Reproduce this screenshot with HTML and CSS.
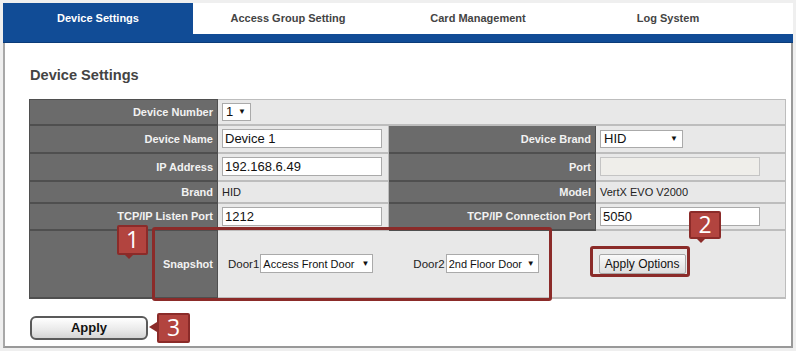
FILE: index.html
```html
<!doctype html>
<html lang="en">

<head>
  <meta charset="utf-8">
  <title>Device Settings</title>
  <link rel="stylesheet" href="styles.css">
</head>

<body>
  <div class="ds-page">
    <nav class="ds-tabs">
      <a class="ds-tab is-active">Device Settings</a>
      <a class="ds-tab">Access Group Setting</a>
      <a class="ds-tab">Card Management</a>
      <a class="ds-tab">Log System</a>
    </nav>
    <div class="ds-bar"></div>

    <main class="ds-panel">
      <h2 class="ds-title">Device Settings</h2>

      <table class="ds-form">
        <colgroup>
          <col class="col-l1"><col class="col-v1"><col class="col-l2"><col class="col-v2">
        </colgroup>
        <tr class="row-num">
          <th>Device Number</th>
          <td colspan="3"><span class="ds-select sel-num">1<i>▼</i></span></td>
        </tr>
        <tr class="row-in">
          <th>Device Name</th>
          <td><input class="ds-input" type="text" value="Device 1"></td>
          <th>Device Brand</th>
          <td><span class="ds-select sel-brand">HID<i>▼</i></span></td>
        </tr>
        <tr class="row-in">
          <th>IP Address</th>
          <td><input class="ds-input" type="text" value="192.168.6.49"></td>
          <th>Port</th>
          <td><input class="ds-input ds-input--off" type="text" disabled></td>
        </tr>
        <tr class="row-text">
          <th>Brand</th>
          <td>HID</td>
          <th>Model</th>
          <td>VertX EVO V2000</td>
        </tr>
        <tr class="row-port">
          <th>TCP/IP Listen Port</th>
          <td><input class="ds-input" type="text" value="1212"></td>
          <th>TCP/IP Connection Port</th>
          <td><input class="ds-input" type="text" value="5050"></td>
        </tr>
        <tr class="row-snap">
          <th>Snapshot</th>
          <td colspan="3">
            <div class="ds-snap">
              <span class="ds-door">Door1</span>
              <span class="ds-select sel-door1">Access Front Door<i>▼</i></span>
              <span class="ds-door door2">Door2</span>
              <span class="ds-select sel-door2">2nd Floor Door<i>▼</i></span>
              <button class="ds-btn-options" type="button">Apply Options</button>
            </div>
          </td>
        </tr>
      </table>

      <button class="ds-btn-apply" type="button">Apply</button>

      <!-- callouts -->
      <div class="ds-mark mark-1"></div>
      <div class="ds-badge badge-1">1</div>
      <div class="ds-mark mark-2"></div>
      <div class="ds-badge badge-2">2</div>
      <div class="ds-badge badge-3">3</div>
    </main>
  </div>
</body>

</html>
```

FILE: styles.css
```css
:root {
  --blue: #114c96;
  --blueDark: #0b3b78;
  --cellDark: #6b6b6b;
  --cellLight: #e8e8e8;
  --red: #8b2b29;
  --redFill: #b2443f;
  --text: #222;
}

html body {
  margin: 0;
  padding: 0;
}

body {
  font-family: "Liberation Sans", Arial, sans-serif;
  font-size: 11px;
  color: var(--text);
  background-color: #efefef;
}

.ds-page {
  margin: 3px 3px 0 3px;
  width: 790px;
}

/* tabs */

.ds-tabs {
  display: flex;
  height: 31px;
  background-color: #fff;
}

.ds-tab {
  width: 190px;
  display: flex;
  align-items: center;
  justify-content: center;
  font-weight: bold;
  font-size: 11px;
  color: #444;
  padding-bottom: 1px;
}

.ds-tab.is-active {
  background-color: var(--blue);
  color: #fff;
}

.ds-bar {
  height: 8px;
  background-color: var(--blue);
  border-bottom: 1px solid var(--blueDark);
}

/* panel */

.ds-panel {
  position: relative;
  background-color: #fff;
  border-left: 2px solid #a8a8a8;
  border-right: 2px solid #999;
  border-bottom: 2px solid #999;
  padding: 23px 6px 8px 24px;
  height: 272px;
}

.ds-title {
  margin: 0 0 15px 1px;
  font-size: 14.6px;
  line-height: 18px;
  color: #444;
}

/* form table */

.ds-form {
  table-layout: fixed;
  width: 756px;
  border-collapse: collapse;
  border: 1px solid #7a7a7a;
}

.col-l1 { width: 188px; }
.col-v1 { width: 171px; }
.col-l2 { width: 207px; }
.col-v2 { width: 190px; }

.ds-form th,
.ds-form td {
  padding: 0;
  vertical-align: middle;
  white-space: nowrap;
}

.ds-form th {
  background-color: var(--cellDark);
  color: #f2f2f2;
  font-weight: bold;
  font-size: 11px;
  text-align: right;
  padding-right: 4px;
  border: 1px solid #4f4f4f;
  border-bottom-width: 2px;
}

.ds-form td {
  background-color: var(--cellLight);
  padding-left: 4px;
  border: 1px solid #bdbdbd;
  border-bottom-width: 2px;
  font-size: 11px;
}

.row-num { height: 25px; }
.row-in { height: 28px; }
.row-text { height: 22px; }
.row-port { height: 27px; }
.row-snap { height: 68px; }

.ds-input {
  box-sizing: border-box;
  width: 160px;
  height: 19px;
  margin: 0;
  padding: 0 2px;
  border: 1px solid #aaa;
  background: #fff;
  font-family: "Liberation Sans", Arial, sans-serif;
  font-size: 13px;
  color: #111;
  display: block;
}

.ds-input--off {
  background-color: #efeeea;
  border-color: #c4c4c4;
}

.ds-select {
  box-sizing: border-box;
  display: flex;
  align-items: center;
  justify-content: space-between;
  height: 18px;
  padding: 0 4px 0 3px;
  border: 1px solid #aaa;
  background-color: #fff;
  font-size: 13px;
  color: #111;
  white-space: nowrap;
}

.ds-select i {
  font-style: normal;
  font-size: 8px;
}

.sel-num { width: 29px; }
.sel-brand { width: 83px; }

.ds-snap {
  display: flex;
  align-items: center;
  padding-left: 6px;
}

.ds-door {
  font-size: 11.5px;
  margin-right: 1px;
}

.door2 {
  margin-left: 40px;
}

.sel-door1,
.sel-door2 {
  flex: none;
  height: 19px;
  font-size: 11px;
  padding-left: 2px;
  padding-right: 3px;
}

.sel-door1 { width: 113px; }
.sel-door2 { width: 93px; }

.ds-btn-options {
  margin-left: 60px;
  width: 87px;
  height: 20px;
  padding: 0;
  font-family: "Liberation Sans", Arial, sans-serif;
  font-size: 12px;
  color: #111;
  border: 1px solid #a8a8a8;
  border-radius: 2px;
  background: linear-gradient(#fafafa, #dedede);
}

.ds-btn-apply {
  display: block;
  margin-top: 17px;
  margin-left: 1px;
  width: 118px;
  height: 24px;
  padding: 0;
  font-family: "Liberation Sans", Arial, sans-serif;
  font-size: 13px;
  font-weight: bold;
  color: #111;
  border: 2px solid #5a5a5a;
  border-radius: 6px;
  background: linear-gradient(#ffffff, #e9e9e9 60%, #d4d4d4);
}

/* callouts */

.ds-mark {
  position: absolute;
  box-sizing: border-box;
  border: 3px solid var(--red);
  border-radius: 3px;
}

.mark-1 {
  left: 147px;
  top: 184px;
  width: 400px;
  height: 74px;
}

.mark-2 {
  left: 585px;
  top: 203px;
  width: 100px;
  height: 31px;
}

.ds-badge {
  position: absolute;
  box-sizing: border-box;
  width: 31px;
  height: 30px;
  background-color: var(--redFill);
  border: 2px solid var(--red);
  border-radius: 2px;
  color: #fff;
  font-family: "Open Sans", "DejaVu Sans", sans-serif;
  font-size: 23px;
  line-height: 25px;
  text-align: center;
}

.ds-badge::after {
  content: "";
  position: absolute;
  width: 0;
  height: 0;
}

.badge-1 {
  left: 112px;
  top: 182px;
}

.badge-1::after,
.badge-2::after {
  left: 6px;
  bottom: -6px;
  border-left: 4px solid transparent;
  border-right: 4px solid transparent;
  border-top: 4px solid var(--red);
}

.badge-2 {
  left: 684px;
  top: 168px;
  width: 32px;
  height: 28px;
  line-height: 23px;
}

.badge-3 {
  left: 152px;
  top: 270px;
  width: 33px;
}

.badge-3::after {
  left: -10px;
  top: 7px;
  border-top: 5px solid transparent;
  border-bottom: 5px solid transparent;
  border-right: 8px solid var(--red);
}
```
